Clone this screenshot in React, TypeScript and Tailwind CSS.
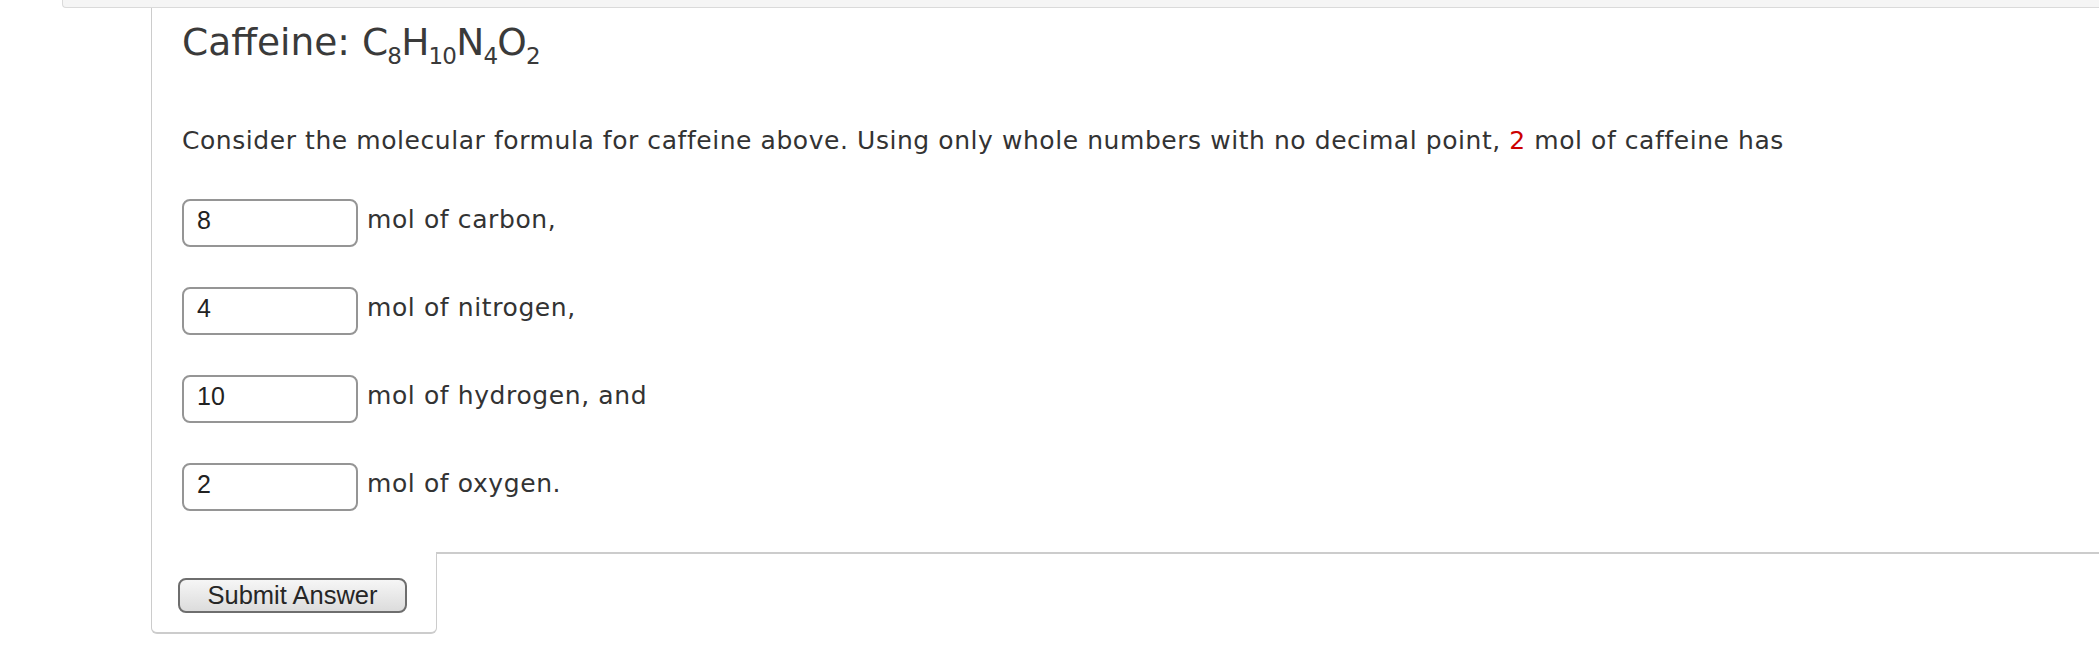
export default function App() {
  const rows = [
    { value: '8', label: 'mol of carbon,' },
    { value: '4', label: 'mol of nitrogen,' },
    { value: '10', label: 'mol of hydrogen, and' },
    { value: '2', label: 'mol of oxygen.' },
  ]

  return (
    <div className="w-[2099px] h-[648px] bg-white overflow-hidden text-[#333] font-['DejaVu_Sans',Verdana,sans-serif]">
      {/* top strip left over from the previous question */}
      <div className="ml-[62px] h-[8px] bg-[#f5f5f5] border-l border-b border-[#dadada] rounded-bl-[4px]"></div>

      <div className="ml-[151px]">
        <div className="border-l border-[#cccccc] pl-[30px] pt-[16px] pb-[41px]">
          <h2 className="text-[37.5px] leading-[37px] font-normal text-[#3a3a3a] whitespace-nowrap">
            Caffeine:{' '}
            <span className="tracking-[-0.8px]">
              C<span className="relative top-[9px] text-[23px] leading-[0]">8</span>H
              <span className="relative top-[9px] text-[23px] leading-[0]">10</span>N
              <span className="relative top-[9px] text-[23px] leading-[0]">4</span>O
              <span className="relative top-[9px] text-[23px] leading-[0]">2</span>
            </span>
          </h2>

          <p className="mt-[67px] text-[25px] leading-[25px] tracking-[0.56px] whitespace-nowrap">
            Consider the molecular formula for caffeine above. Using only whole numbers with no decimal point,{' '}
            <span className="text-[#cc0000]">2</span> mol of caffeine has
          </p>

          <div className="mt-[46px] flex flex-col gap-[40px]">
            {rows.map((r) => (
              <div key={r.label} className="flex items-start">
                <input
                  readOnly
                  value={r.value}
                  className="w-[176px] h-[48px] border-2 border-[#959595] rounded-[8px] pl-[13px] pb-[5px] text-[25px] text-[#222] font-['Liberation_Sans',Arial,sans-serif] outline-none bg-white"
                />
                <span className="ml-[9px] mt-[8px] text-[25px] leading-[25px] tracking-[0.6px] whitespace-nowrap">{r.label}</span>
              </div>
            ))}
          </div>
        </div>

        <div className="flex">
          <div className="w-[286px] h-[82px] border-l border-r border-b-2 border-[#cccccc] rounded-b-[6px] pl-[26px] pt-[26px]">
            <button className="w-[229px] h-[35px] border-2 border-[#6e6e6e] rounded-[8px] bg-gradient-to-b from-[#f6f6f6] to-[#dcdcdc] text-[25.5px] leading-none text-[#262626] font-['Liberation_Sans',Arial,sans-serif]">
              Submit Answer
            </button>
          </div>
          <div className="flex-1 border-t-2 border-[#cccccc]"></div>
        </div>
      </div>
    </div>
  )
}
